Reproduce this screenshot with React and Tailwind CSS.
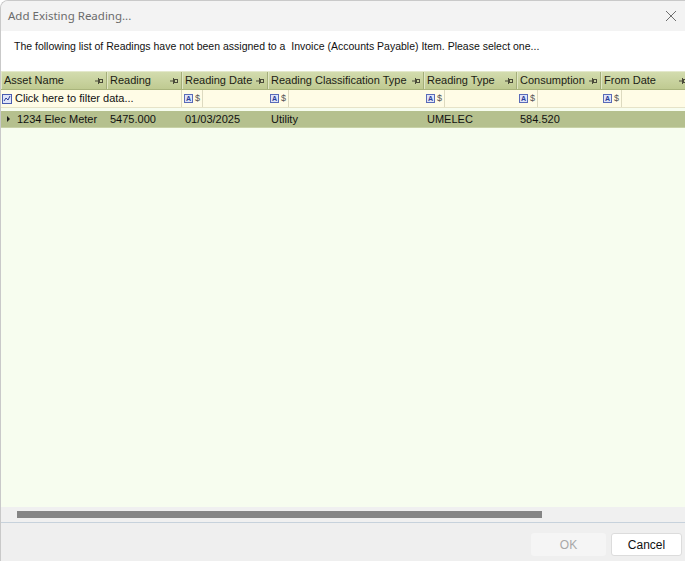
import React from 'react';

const cols = [
  { name: 'Asset Name', w: 106 },
  { name: 'Reading', w: 75 },
  { name: 'Reading Date', w: 86 },
  { name: 'Reading Classification Type', w: 156 },
  { name: 'Reading Type', w: 93 },
  { name: 'Consumption', w: 84 },
  { name: 'From Date', w: 90 },
];

const row = ['1234 Elec Meter', '5475.000', '01/03/2025', 'Utility', 'UMELEC', '584.520', ''];

const Pin = () => (
  <svg width="8" height="6" viewBox="0 0 8 6" className="shrink-0">
    <rect x="0" y="2.5" width="3" height="1" fill="#4a4a3a" />
    <rect x="3" y="0" width="1" height="6" fill="#4a4a3a" />
    <rect x="4.5" y="1.5" width="3" height="3" fill="none" stroke="#4a4a3a" strokeWidth="1" />
  </svg>
);

const FilterIcon = () => (
  <div className="flex items-center gap-[2px]">
    <div className="w-[9px] h-[9px] border border-[#5a6bb8] bg-[#dfe4f8] flex items-center justify-center text-[7px] leading-none text-[#2c3e9a] font-bold">A</div>
    <span className="text-[9px] leading-none text-[#555]">$</span>
  </div>
);

export default function App() {
  return (
    <div className="w-[685px] h-[561px] flex flex-col bg-[#efefef] overflow-hidden rounded-tl-[8px] border-l border-t border-[#c9c9c9]" style={{ fontFamily: '"Liberation Sans", Arial, sans-serif' }}>
      {/* title bar */}
      <div className="h-[30px] shrink-0 bg-[#f3f3f3] flex items-center justify-between pl-[7px] pr-[6px]">
        <span className="text-[11.5px] text-[#6b6b6b]" style={{ fontFamily: '"Noto Sans", "Open Sans", sans-serif' }}>Add Existing Reading...</span>
        <svg width="12" height="12" viewBox="0 0 12 12" className="mr-[2px]">
          <path d="M1 1 L11 11 M11 1 L1 11" stroke="#6e6e6e" strokeWidth="1" />
        </svg>
      </div>
      {/* instruction */}
      <div className="h-[40px] shrink-0 bg-white flex items-start pt-[8px] pl-[13px] text-[10.5px] text-[#111]">
        The following list of Readings have not been assigned to a&nbsp; Invoice (Accounts Payable) Item. Please select one...
      </div>
      {/* grid */}
      <div className="flex-1 flex flex-col bg-[#f7fdef] overflow-hidden">
        {/* header */}
        <div className="h-[19px] shrink-0 flex bg-gradient-to-b from-[#d3dcae] to-[#bfca91] border-b border-[#a9b47c] border-t border-t-[#e4e9cc]">
          {cols.map((c, i) => (
            <div key={i} style={{ width: c.w }} className="shrink-0 flex items-center justify-between pl-[2px] pr-[3px] border-r border-[#a4ae7a] border-l border-l-[#e1e7c6]">
              <span className="text-[11px] text-[#1c1c14] whitespace-nowrap">{c.name}</span>
              <Pin />
            </div>
          ))}
        </div>
        {/* filter row */}
        <div className="h-[18px] shrink-0 flex bg-[#fffce6] border-b border-[#e6e3c8]">
          <div style={{ width: cols[0].w + cols[1].w }} className="shrink-0 flex items-center pl-[1px] gap-[3px] border-r border-[#dddac0]">
            <div className="w-[10px] h-[10px] border border-[#4a5cb0] bg-[#dfe4f8] flex items-center justify-center">
              <svg width="8" height="8" viewBox="0 0 8 8">
                <path d="M1 6 L3 3 L5 5 L7 1" stroke="#2c3e9a" strokeWidth="1" fill="none" />
              </svg>
            </div>
            <span className="text-[11px] text-[#111] whitespace-nowrap">Click here to filter data...</span>
          </div>
          {cols.slice(2).map((c, i) => (
            <div key={i} style={{ width: c.w }} className="shrink-0 flex items-center pl-[2px]">
              <div className="pr-[2px] border-r border-[#dddac0] h-full flex items-center"><FilterIcon /></div>
            </div>
          ))}
        </div>
        <div className="h-[3px] shrink-0 bg-[#f7fdef]" />
        {/* data row */}
        <div className="h-[17px] shrink-0 flex bg-[#b5c08e] border-b border-[#c8d1a6]">
          {row.map((v, i) => (
            <div key={i} style={{ width: cols[i].w }} className="shrink-0 flex items-center pl-[3px]">
              {i === 0 && (
                <svg width="10" height="8" viewBox="0 0 10 8" className="shrink-0 mr-[3px]">
                  <path d="M3 1 L6 4 L3 7 Z" fill="#1a1a1a" />
                </svg>
              )}
              <span className="text-[11px] text-[#111] whitespace-nowrap">{v}</span>
            </div>
          ))}
        </div>
        <div className="flex-1" />
      </div>
      {/* horizontal scrollbar */}
      <div className="h-[16px] shrink-0 bg-[#f0f0f0] flex items-center pl-[16px] border-b border-[#c7d2dc]">
        <div className="w-[525px] h-[7px] bg-[#858585]" />
      </div>
      {/* footer */}
      <div className="h-[38px] shrink-0 flex items-start justify-end gap-[5px] pt-[10px] pr-[3px]">
        <button className="w-[75px] h-[23px] bg-[#f5f5f5] text-[12px] text-[#a8a8a8] rounded-[3px]">OK</button>
        <button className="w-[71px] h-[23px] bg-white text-[12px] text-[#111] rounded-[3px] border border-[#dcdcdc]">Cancel</button>
      </div>
    </div>
  );
}
